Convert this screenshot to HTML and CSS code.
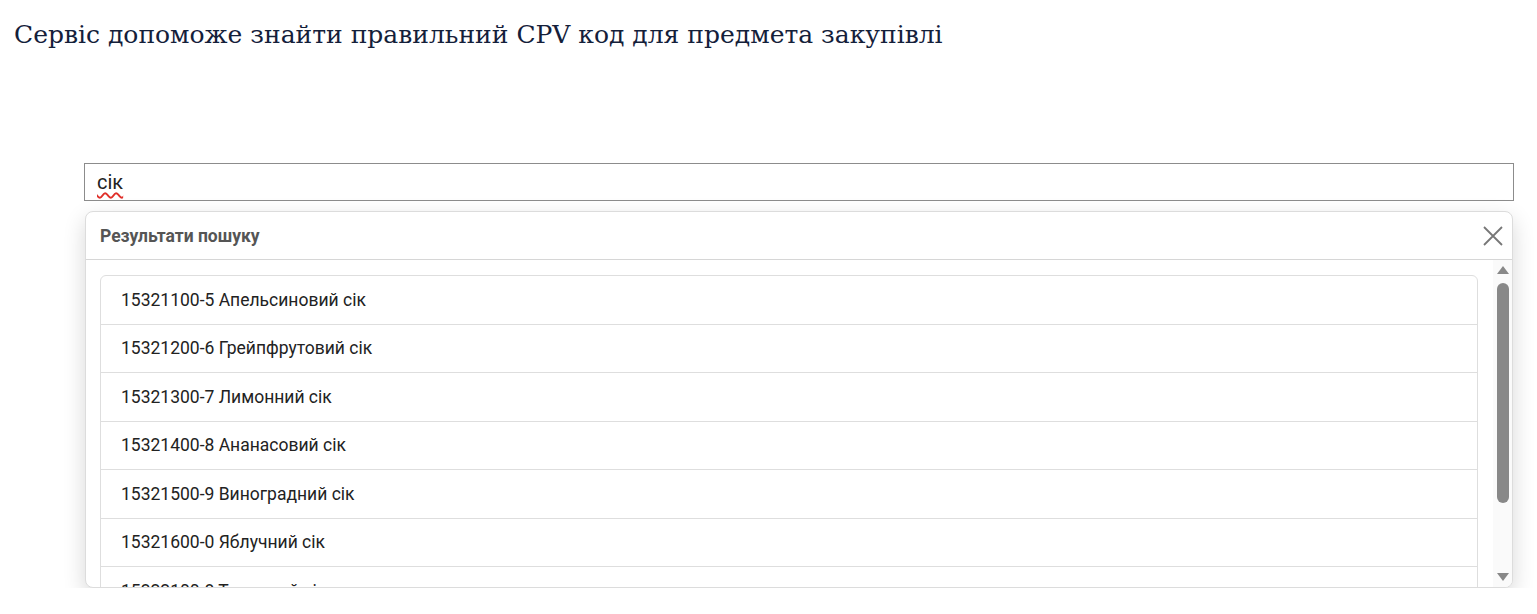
FILE: index.html
```html
<!DOCTYPE html>
<html lang="uk">
<head>
<meta charset="utf-8">
<title>CPV</title>
<link rel="stylesheet" href="styles.css">
</head>
<body>
<h1 class="title">Сервіс допоможе знайти правильний CPV код для предмета закупівлі</h1>
<div class="search">
  <div class="input"><span class="typo">сік</span></div>
  <div class="dropdown">
    <div class="dd-head">
      <span class="dd-title">Результати пошуку</span>
      <svg class="close" width="20" height="20" viewBox="0 0 20 20"><path d="M1 1L19 19M19 1L1 19" stroke="#777" stroke-width="1.8" fill="none"/></svg>
    </div>
    <div class="dd-body">
      <div class="list-wrap">
        <div class="list">
          <div class="row">15321100-5 Апельсиновий сік</div>
          <div class="row">15321200-6 Грейпфрутовий сік</div>
          <div class="row">15321300-7 Лимонний сік</div>
          <div class="row">15321400-8 Ананасовий сік</div>
          <div class="row">15321500-9 Виноградний сік</div>
          <div class="row">15321600-0 Яблучний сік</div>
          <div class="row">15322100-8 Томатний сік</div>
        </div>
      </div>
      <div class="scrollbar">
        <div class="arrow up"></div>
        <div class="thumb"></div>
        <div class="arrow down"></div>
      </div>
    </div>
  </div>
</div>
</body>
</html>
```
FILE: styles.css
```css
* { box-sizing: border-box; }
body {
  margin: 0;
  background: #fff;
  font-family: Roboto, "Liberation Sans", sans-serif;
}
.title {
  margin: 0;
  padding: 18px 0 0 14px;
  font-family: "DejaVu Serif", "Liberation Serif", serif;
  font-weight: normal;
  font-size: 25px;
  line-height: 34px;
  color: #14203a;
}
.search {
  margin: 111px 23px 0 84px;
}
.input {
  height: 38px;
  border: 1px solid #8c8c8c;
  padding: 0 12px;
  font-size: 20px;
  line-height: 36px;
  color: #222;
}
.typo {
  text-decoration: underline wavy #e0302a;
  text-decoration-thickness: 1.5px;
  text-underline-offset: 3px;
}
.dropdown {
  margin: 10px 1px 0 1px;
  height: 377px;
  border: 1px solid #dcdcdc;
  border-radius: 8px;
  background: #fff;
  box-shadow: 0 8px 22px rgba(0,0,0,0.16);
  display: flex;
  flex-direction: column;
  overflow: hidden;
}
.dd-head {
  height: 48px;
  flex: none;
  border-bottom: 1px solid #d6d6d6;
  display: flex;
  align-items: center;
  justify-content: space-between;
  padding: 0 9px 0 14px;
}
.dd-title {
  font-size: 17.5px;
  font-weight: bold;
  color: #555;
}
.close { display: block; }
.dd-body {
  flex: 1;
  display: flex;
  min-height: 0;
}
.list-wrap {
  flex: 1;
  padding: 15px 0 0 14px;
  overflow: hidden;
}
.list {
  border: 1px solid #dedede;
  border-radius: 6px;
}
.row {
  height: 48.5px;
  border-bottom: 1px solid #dedede;
  padding: 0 20px;
  display: flex;
  align-items: center;
  font-size: 17.5px;
  color: #222;
}
.scrollbar {
  width: 19px;
  margin-left: 15px;
  flex: none;
  background: #fafafa;
  display: flex;
  flex-direction: column;
  align-items: center;
  padding: 6px 0 6px 0;
}
.arrow {
  width: 0;
  height: 0;
  border-left: 6px solid transparent;
  border-right: 6px solid transparent;
}
.arrow.up { border-bottom: 8px solid #888; }
.arrow.down { border-top: 8px solid #888; margin-top: auto; }
.thumb {
  width: 12px;
  height: 220px;
  margin-top: 9px;
  background: #888;
  border-radius: 6px;
}
```
